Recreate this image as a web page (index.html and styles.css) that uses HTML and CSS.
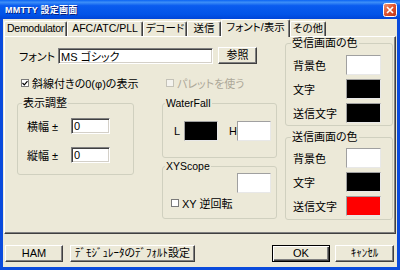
FILE: index.html
```html
<!DOCTYPE html>
<html lang="ja">
<head>
  <meta charset="UTF-8">
  <title>MMTTY 設定画面</title>
  <link rel="stylesheet" href="styles.css">
</head>
<body>
  <div class="window">
    <div class="titlebar">
      <span class="title">MMTTY 設定画面</span>
      <span class="close">
        <svg width="14" height="14" viewBox="0 0 14 14">
          <defs>
            <linearGradient id="cg" x1="0" y1="0" x2="1" y2="1">
              <stop offset="0" stop-color="#F09A7A"/>
              <stop offset="0.5" stop-color="#E0522C"/>
              <stop offset="1" stop-color="#B8341A"/>
            </linearGradient>
          </defs>
          <rect x="0.5" y="0.5" width="13" height="13" rx="2" fill="url(#cg)" stroke="#fff"/>
          <path d="M4 4 L10 10 M10 4 L4 10" stroke="#fff" stroke-width="1.7"/>
        </svg>
      </span>
    </div>

    <div class="client">
      <div class="tabs">
        <div class="tab">Demodulator</div>
        <div class="tab">AFC/ATC/PLL</div>
        <div class="tab">デコード</div>
        <div class="tab">送信</div>
        <div class="tab active">フォント/表示</div>
        <div class="tab">その他</div>
      </div>

      <div class="panel">
        <div class="left">
          <div class="font-row">
            <span class="font-label">フォント</span>
            <input class="edit font-edit" type="text" value="MS ゴシック" readonly>
            <button class="btn ref">参照</button>
          </div>

          <div class="check-row">
            <label class="check slash"><span class="box"><svg width="6" height="6" viewBox="0 0 6 6"><path d="M0.5 3 L2.3 4.8 L5.5 1.2" fill="none" stroke="#000" stroke-width="1.2"/></svg></span>斜線付きの0(φ)の表示</label>
            <label class="check disabled"><span class="box"></span>パレットを使う</label>
          </div>

          <div class="groups">
            <fieldset class="group adjust">
              <legend>表示調整</legend>
              <div class="adj-row"><span class="adj-label">横幅 ±</span><input class="edit num" type="text" value="0" readonly></div>
              <div class="adj-row"><span class="adj-label">縦幅 ±</span><input class="edit num" type="text" value="0" readonly></div>
            </fieldset>

            <div class="stack">
              <fieldset class="group wf">
                <legend>WaterFall</legend>
                <div class="wf-row">
                  <span class="wf-l">L</span>
                  <span class="swatch small black"></span>
                  <span class="wf-h">H</span>
                  <span class="swatch small white"></span>
                </div>
              </fieldset>

              <fieldset class="group xy">
                <legend>XYScope</legend>
                <span class="swatch small white"></span>
                <label class="check"><span class="box"></span>XY 逆回転</label>
              </fieldset>
            </div>
          </div>
        </div>

        <div class="right">
          <fieldset class="group colors rx">
            <legend>受信画面の色</legend>
            <div class="color-row"><span>背景色</span><span class="swatch white"></span></div>
            <div class="color-row"><span>文字</span><span class="swatch black"></span></div>
            <div class="color-row"><span>送信文字</span><span class="swatch black"></span></div>
          </fieldset>

          <fieldset class="group colors tx">
            <legend>送信画面の色</legend>
            <div class="color-row"><span>背景色</span><span class="swatch white"></span></div>
            <div class="color-row"><span>文字</span><span class="swatch black"></span></div>
            <div class="color-row"><span>送信文字</span><span class="swatch red"></span></div>
          </fieldset>
        </div>
      </div>

      <div class="footer">
        <button class="btn ham">HAM</button>
        <button class="btn defaults">ﾃﾞﾓｼﾞｭﾚｰﾀのﾃﾞﾌｫﾙﾄ設定</button>
        <button class="btn ok default">OK</button>
        <button class="btn cancel">ｷｬﾝｾﾙ</button>
      </div>
    </div>
  </div>
</body>
</html>
```

FILE: styles.css
```css
* {
  box-sizing: border-box;
}

body {
  margin: 0;
  background: #fff;
  font-family: "Liberation Sans", "Noto Sans CJK JP", sans-serif;
  font-size: 11px;
  font-feature-settings: "palt";
  color: #000;
}

.window {
  width: 400px;
  height: 270px;
  display: flex;
  flex-direction: column;
  background: #ECE9D8;
}

.titlebar {
  height: 19px;
  display: flex;
  align-items: center;
  justify-content: space-between;
  padding: 0 3px 0 5px;
  background: linear-gradient(#0A63F3, #3D8FF8 12%, #0A5CEF 30%, #0254E8 75%, #0045D8);
  color: #fff;
}

.title {
  font-size: 9px;
  font-weight: bold;
  letter-spacing: 0.2px;
  text-shadow: 1px 1px #0A237F;
}

.close {
  display: flex;
  width: 14px;
  height: 14px;
}

.client {
  flex: 1;
  display: flex;
  flex-direction: column;
  border: 3px solid #0A4BDC;
  border-top: 0;
  padding: 0 1px;
}

/* tabs */
.tabs {
  height: 17px;
  display: flex;
  align-items: flex-end;
  font-size: 10.5px;
}

.tab {
  height: 15px;
  line-height: 13px;
  text-align: center;
  white-space: nowrap;
  border-top: 1px solid #fff;
  border-left: 1px solid #fff;
  border-right: 1px solid #404040;
  box-shadow: inset -1px 0 #808080;
  border-radius: 2px 2px 0 0;
}

.tab:nth-child(1) { width: 63px; letter-spacing: -0.3px; }
.tab:nth-child(2) { width: 76px; }
.tab:nth-child(3) { width: 44px; }
.tab:nth-child(4) { width: 34px; }
.tab:nth-child(5) { width: 69px; }
.tab:nth-child(6) { width: 36px; }

.tab.active {
  height: 18px;
  line-height: 15px;
  margin-bottom: -1px;
  background: #ECE9D8;
  position: relative;
  z-index: 1;
}

/* panel */
.panel {
  height: 198px;
  display: grid;
  grid-template-columns: 261px 108px;
  column-gap: 7px;
  padding-left: 12px;
  border: 1px solid;
  border-color: #fff #404040 #404040 #fff;
  box-shadow: inset -1px -1px #808080;
}

.font-row {
  margin-top: 10px;
  height: 17px;
  display: flex;
  align-items: center;
  padding-left: 2px;
}

.font-label {
  width: 39px;
}

.edit {
  font: inherit;
  color: #000;
  height: 16px;
  padding: 0 2px;
  background: #fff;
  border: 1px solid;
  border-color: #808080 #fff #fff #808080;
  box-shadow: inset 1px 1px #404040, inset -1px -1px #D4D0C8;
  outline: none;
}

.font-edit {
  width: 155px;
}

.btn {
  font: inherit;
  color: #000;
  height: 17px;
  padding: 0;
  line-height: 15px;
  background: #ECE9D8;
  border: 1px solid;
  border-color: #fff #404040 #404040 #fff;
  box-shadow: inset -1px -1px #808080;
}

.btn.default {
  border-color: #000;
  box-shadow: inset 1px 1px #fff, inset -1px -1px #404040, inset -2px -2px #808080;
}

.ref {
  width: 39px;
  margin-left: 5px;
}

.check-row {
  margin-top: 12px;
  height: 13px;
  display: flex;
  align-items: center;
  padding-left: 4px;
}

.check {
  display: flex;
  align-items: center;
  gap: 3px;
  white-space: nowrap;
}

.check.slash {
  width: 145px;
}

.box {
  width: 8px;
  height: 8px;
  display: flex;
  align-items: center;
  justify-content: center;
  background: #fff;
  border: 1px solid #7A7A7A;
}

.check.disabled {
  color: #ACA899;
}

.check.disabled .box {
  border-color: #C4C2B8;
  background: #F4F3EE;
}

/* group boxes */
.groups {
  margin-top: 8px;
  display: flex;
  gap: 28px;
}

.group {
  margin: 0;
  min-width: 0;
  border: 1px solid #D0D0BF;
  border-radius: 3px;
}

.group legend {
  padding: 0 1px;
  line-height: 13px;
}

.adjust {
  width: 117px;
  height: 78px;
  padding: 8px 0 0 9px;
}

.adjust legend {
  margin-left: -5px;
}

.adj-row {
  display: flex;
  align-items: center;
  height: 16px;
}

.adj-row + .adj-row {
  margin-top: 13px;
}

.adj-label {
  width: 44px;
}

.num {
  width: 39px;
}

.stack {
  width: 115px;
}

.wf {
  padding: 11px 0 16px 11px;
}

.wf legend,
.xy legend {
  font-size: 10.5px;
}

.wf legend {
  margin-left: -9px;
}

.wf-row {
  display: flex;
  align-items: center;
}

.wf-l {
  width: 10px;
}

.wf-h {
  width: 8px;
  margin-left: 11px;
}

.xy {
  margin-top: 2px;
  padding: 0 5px 9px 8px;
}

.xy legend {
  margin-left: -6px;
}

.xy .swatch {
  display: block;
  margin-left: auto;
}

.xy .check {
  margin-top: 4px;
  height: 12px;
}

.swatch {
  width: 35px;
  height: 20px;
  border: 1px solid;
  border-color: #A0A0A0 #E8E8E8 #E8E8E8 #A0A0A0;
}

.swatch.small {
  width: 34px;
}

.swatch.black { background: #000; }
.swatch.white { background: #fff; }
.swatch.red { background: #FF0000; }

.colors {
  padding: 5px 11px 2px 7px;
}

.colors legend {
  margin-left: -2px;
}

.colors.tx {
  margin-top: 5px;
  padding-top: 4px;
  padding-bottom: 3px;
}

.color-row {
  height: 20px;
  display: flex;
  align-items: center;
  justify-content: space-between;
}

.color-row + .color-row {
  margin-top: 4px;
}

/* bottom buttons */
.footer {
  margin-top: 11px;
  display: flex;
  padding: 0 2px 0 1px;
}

.ham { width: 58px; }
.defaults { width: 125px; margin-left: 7px; }
.ok { width: 58px; margin-left: auto; }
.cancel { width: 59px; margin-left: 5px; }
```
